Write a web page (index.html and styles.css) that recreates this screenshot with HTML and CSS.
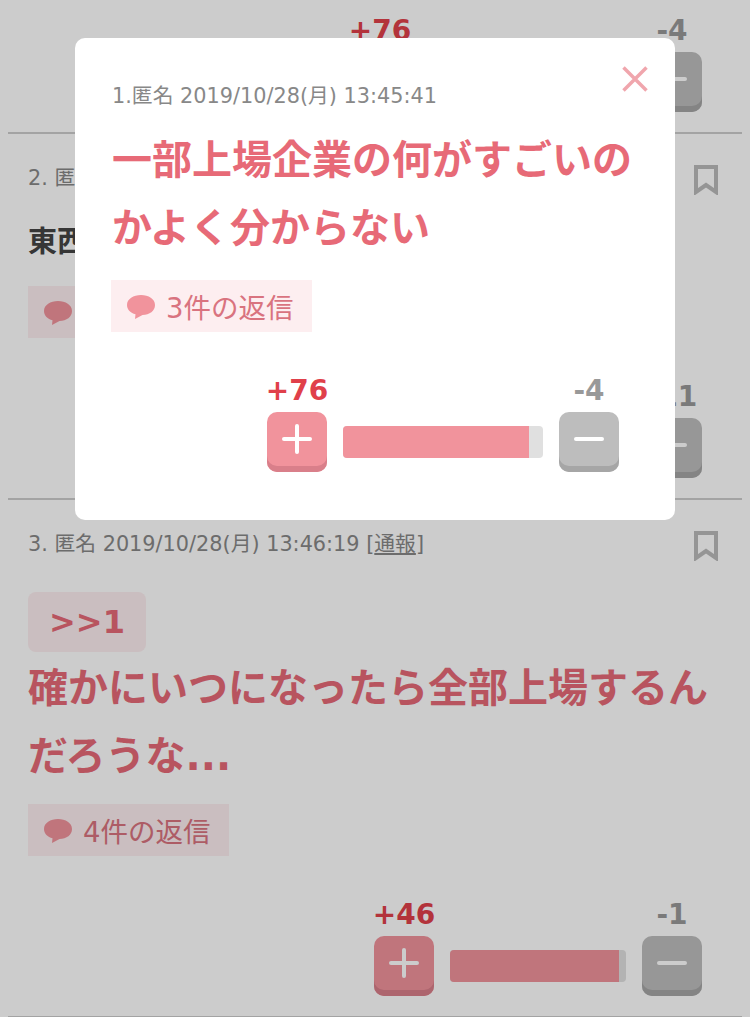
FILE: index.html
```html
<!DOCTYPE html>
<html lang="ja">
<head>
  <meta charset="utf-8">
  <meta name="viewport" content="width=750">
  <title>コメント</title>
  <link rel="stylesheet" href="styles.css">
</head>
<body>
<div class="thread">
  <div class="post post-first">
    <div class="votes">
      <div class="vote">
        <div class="count count-plus">+76</div>
        <div class="btn btn-plus"><span class="plus-icon"></span></div>
      </div>
      <div class="bar" style="width:200px"><div class="bar-fill" style="width:95%"></div></div>
      <div class="vote">
        <div class="count count-minus">-4</div>
        <div class="btn btn-minus"><span class="minus-icon"></span></div>
      </div>
    </div>
  </div>

  <div class="post">
    <div class="meta">
      <span>2. 匿名 2019/10/28(月) 13:45:58 [<u>通報</u>]</span>
      <svg class="bookmark" viewBox="0 0 24 30"><path d="M2 2H22V27L12 20 2 27Z"/></svg>
    </div>
    <div class="body body-small">東西</div>
    <div class="replies">
      <svg class="bubble" viewBox="0 0 28 26"><path d="M14 1C6.5 1 0 4.900 0 11c0 4.700 3.700 8 8.500 9.200L8 25l7.500-4C22.500 20.700 28 17 28 11 28 4.900 21.500 1 14 1Z"/></svg>
      1件の返信
    </div>
    <div class="votes">
      <div class="vote">
        <div class="count count-plus">+12</div>
        <div class="btn btn-plus"><span class="plus-icon"></span></div>
      </div>
      <div class="bar" style="width:176px"><div class="bar-fill" style="width:52%"></div></div>
      <div class="vote">
        <div class="count count-minus">-11</div>
        <div class="btn btn-minus"><span class="minus-icon"></span></div>
      </div>
    </div>
  </div>

  <div class="post">
    <div class="meta">
      <span>3. 匿名 2019/10/28(月) 13:46:19 [<u>通報</u>]</span>
      <svg class="bookmark" viewBox="0 0 24 30"><path d="M2 2H22V27L12 20 2 27Z"/></svg>
    </div>
    <div class="anchor">&gt;&gt;1</div>
    <div class="body body-big">確かにいつになったら全部上場するんだろうな...</div>
    <div class="replies">
      <svg class="bubble" viewBox="0 0 28 26"><path d="M14 1C6.5 1 0 4.900 0 11c0 4.700 3.700 8 8.500 9.200L8 25l7.500-4C22.500 20.700 28 17 28 11 28 4.900 21.500 1 14 1Z"/></svg>
      4件の返信
    </div>
    <div class="votes">
      <div class="vote">
        <div class="count count-plus">+46</div>
        <div class="btn btn-plus"><span class="plus-icon"></span></div>
      </div>
      <div class="bar" style="width:176px"><div class="bar-fill" style="width:96%"></div></div>
      <div class="vote">
        <div class="count count-minus">-1</div>
        <div class="btn btn-minus"><span class="minus-icon"></span></div>
      </div>
    </div>
  </div>
</div>

<div class="overlay"></div>

<div class="modal">
  <svg class="close" viewBox="0 0 26 26"><path d="M1.500 1.500L24.500 24.500M24.500 1.500L1.500 24.500"/></svg>
  <div class="meta"><span>1.匿名 2019/10/28(月) 13:45:41</span></div>
  <div class="body body-big">一部上場企業の何がすごいのかよく分からない</div>
  <div class="replies">
    <svg class="bubble" viewBox="0 0 28 26"><path d="M14 1C6.5 1 0 4.900 0 11c0 4.700 3.700 8 8.500 9.200L8 25l7.500-4C22.500 20.700 28 17 28 11 28 4.900 21.500 1 14 1Z"/></svg>
    3件の返信
  </div>
  <div class="votes">
    <div class="vote">
      <div class="count count-plus">+76</div>
      <div class="btn btn-plus"><span class="plus-icon"></span></div>
    </div>
    <div class="bar" style="width:200px"><div class="bar-fill" style="width:93%"></div></div>
    <div class="vote">
      <div class="count count-minus">-4</div>
      <div class="btn btn-minus"><span class="minus-icon"></span></div>
    </div>
  </div>
</div>
</body>
</html>
```

FILE: styles.css
```css
html, body {
  margin: 0;
  height: 1017px;
  overflow: hidden;
}
body {
  background: #fff;
  font-family: "DejaVu Sans", "Noto Sans CJK JP", sans-serif;
}
.thread {
  margin: 0 8px;
}
.post {
  padding: 30px 24px 20px 20px;
  border-bottom: 2px solid #ccc;
}
.post-first {
  padding-top: 13px;
}
.meta {
  display: flex;
  justify-content: space-between;
  font-size: 20.800px;
  line-height: 28px;
  color: #888;
  height: 28px;
}
.meta u {
  text-underline-offset: 2px;
}
.bookmark {
  width: 24px;
  height: 30px;
  margin-top: 1px;
}
.bookmark path {
  fill: none;
  stroke: #bbb;
  stroke-width: 4;
}
.body {
  font-weight: 700;
}
.body-small {
  margin-top: 30px;
  margin-bottom: 24px;
  font-size: 29px;
  line-height: 40px;
  color: #444;
}
.body-big {
  margin-top: 2px;
  margin-bottom: 14px;
  font-size: 40px;
  line-height: 68px;
  color: #e76a77;
}
.anchor {
  width: 118px;
  height: 60px;
  margin-top: 34px;
  border-radius: 8px;
  background: #fdeef0;
  color: #e76a77;
  font-weight: 700;
  font-size: 32px;
  line-height: 60px;
  text-align: center;
}
.replies {
  display: inline-flex;
  align-items: center;
  height: 52px;
  padding: 0 18px 0 16px;
  background: #fdeef0;
  color: #d9737f;
  font-size: 27.500px;
}
.bubble {
  width: 28px;
  height: 26px;
  margin-right: 11px;
  margin-top: 2px;
  fill: #f1939c;
}
.votes {
  display: flex;
  justify-content: flex-end;
  align-items: flex-end;
  gap: 16px;
  margin-top: 41px;
  margin-right: 16px;
}
.post-first .votes {
  margin-top: 0;
}
.vote {
  width: 60px;
}
.count {
  display: flex;
  justify-content: center;
  margin-bottom: 3px;
  white-space: nowrap;
  font-weight: 700;
  font-size: 28px;
  line-height: 36px;
}
.count-plus {
  color: #e0404a;
}
.count-minus {
  color: #999;
}
.btn {
  display: flex;
  align-items: center;
  justify-content: center;
  box-sizing: border-box;
  width: 60px;
  height: 60px;
  padding-bottom: 6px;
  border-radius: 10px;
}
.btn-plus {
  background: #f1939c;
  box-shadow: inset 0 -6px 0 #d97f8a;
}
.btn-minus {
  background: #bdbdbd;
  box-shadow: inset 0 -6px 0 #a6a6a6;
}
.plus-icon, .minus-icon {
  position: relative;
  display: block;
  width: 30px;
  height: 4px;
  border-radius: 2px;
  background: #fff;
}
.plus-icon::after {
  content: "";
  position: absolute;
  left: 13px;
  top: -13px;
  width: 4px;
  height: 30px;
  border-radius: 2px;
  background: #fff;
}
.bar {
  height: 32px;
  margin-bottom: 14px;
  border-radius: 4px;
  background: #e0e0e0;
  overflow: hidden;
}
.bar-fill {
  height: 100%;
  background: #f1939c;
}
.overlay {
  position: fixed;
  left: 0;
  top: 0;
  right: 0;
  bottom: 0;
  background: rgba(0, 0, 0, 0.2);
}
.modal {
  position: fixed;
  left: 75px;
  top: 38px;
  box-sizing: border-box;
  width: 600px;
  height: 482px;
  padding: 44px 40px 0 37px;
  border-radius: 10px;
  background: #fff;
}
.modal .body-big {
  margin-top: 16px;
  margin-bottom: 18px;
}
.modal .replies {
  margin-left: -1px;
}
.close {
  position: absolute;
  right: 27px;
  top: 28px;
  width: 26px;
  height: 26px;
}
.close path {
  fill: none;
  stroke: #f0a6ad;
  stroke-width: 3.500;
}
```
